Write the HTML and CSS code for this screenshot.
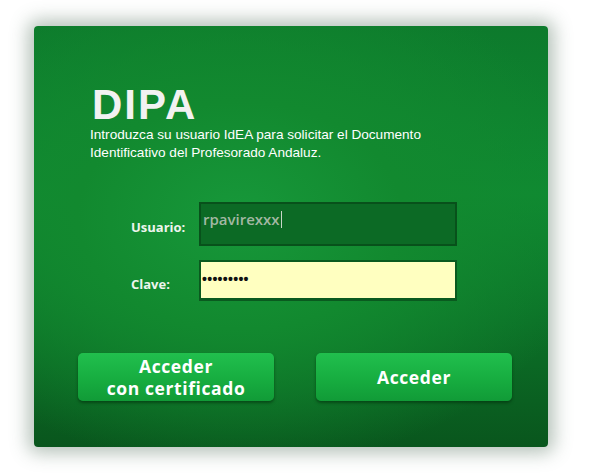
FILE: index.html
```html
<!DOCTYPE html>
<html lang="es">
<head>
  <meta charset="UTF-8">
  <meta name="viewport" content="width=device-width, initial-scale=1.0">
  <title>DIPA</title>
  <link rel="stylesheet" href="styles.css">
</head>
<body>
  <div class="card">
    <div class="head">
      <h1>DIPA</h1>
      <p>Introduzca su usuario IdEA para solicitar el Documento<br>Identificativo del Profesorado Andaluz.</p>
    </div>

    <form class="login">
      <div class="row">
        <label for="usuario">Usuario:</label>
        <div class="field user">rpavirexxx<span class="caret"></span></div>
      </div>
      <div class="row">
        <label for="clave">Clave:</label>
        <div class="field pass">&#8226;&#8226;&#8226;&#8226;&#8226;&#8226;&#8226;&#8226;&#8226;</div>
      </div>
    </form>

    <div class="buttons">
      <button type="button">Acceder<br>con certificado</button>
      <button type="button">Acceder</button>
    </div>
  </div>
</body>
</html>
```

FILE: styles.css
```css
html, body {
  margin: 0;
  padding: 0;
  height: 100%;
  background: #fff;
}

body {
  padding: 26px 52px 0 34px;
  box-sizing: border-box;
}

.card {
  width: 514px;
  height: 421px;
  box-sizing: border-box;
  border-radius: 4px;
  background:
    radial-gradient(ellipse 70% 60% at 40% 45%, #17983a 0%, #12892f 45%, rgba(12,110,38,0) 100%),
    linear-gradient(180deg, #0d7a2c 0%, #0f8a32 40%, #0c7128 70%, #09561d 100%);
  box-shadow: 0 0 18px 6px rgba(90, 120, 100, 0.45);
  padding: 58px 0 0 57px;
  font-family: "Liberation Sans", Arial, sans-serif;
  color: #fff;
}

.head h1 {
  margin: 0 0 0 1px;
  font-size: 42px;
  line-height: 42px;
  font-weight: bold;
  color: #f2f2f2;
  letter-spacing: 2px;
}

.head p {
  margin: 0 0 0 -1px;
  font-size: 13.6px;
  line-height: 18px;
  color: #fff;
}

.login {
  margin: 40px 0 0 0;
  display: flex;
  flex-direction: column;
  gap: 14px;
}

.row {
  display: flex;
  align-items: center;
}

.row label {
  width: 108px;
  padding: 6px 0 0 40px;
  box-sizing: border-box;
  font-family: "Open Sans", "DejaVu Sans", sans-serif;
  font-weight: bold;
  font-size: 13px;
  color: #eef5ee;
}

.field {
  width: 258px;
  box-sizing: border-box;
  border: 2px solid #08511b;
  font-family: "Open Sans", sans-serif;
}

.user {
  height: 44px;
  background: #0c6a25;
  color: #a3b8a3;
  font-size: 15px;
  font-weight: 600;
  padding: 5px 0 0 2px;
  line-height: 20px;
}

.caret {
  display: inline-block;
  width: 1px;
  height: 17px;
  background: #c9d6c9;
  vertical-align: -3px;
  margin-left: 1px;
}

.pass {
  height: 41px;
  background: #ffffc0;
  color: #111;
  font-family: "Liberation Sans", sans-serif;
  font-weight: bold;
  font-size: 14px;
  letter-spacing: 0.3px;
  padding: 9px 0 0 1px;
  border-color: #0a5a1f;
  border-bottom-width: 3px;
}

.buttons {
  display: flex;
  gap: 42px;
  margin: 52px 0 0 -13px;
}

button {
  width: 196px;
  height: 48px;
  border: none;
  border-radius: 5px;
  background: linear-gradient(180deg, #21bf4d 0%, #17ad40 55%, #119b37 100%);
  box-shadow: 0 2px 3px rgba(0, 40, 10, 0.55);
  color: #fff;
  font-family: "Open Sans", "DejaVu Sans", sans-serif;
  font-weight: bold;
  font-size: 17.5px;
  line-height: 22px;
  letter-spacing: 0.6px;
  padding: 0;
}
```
